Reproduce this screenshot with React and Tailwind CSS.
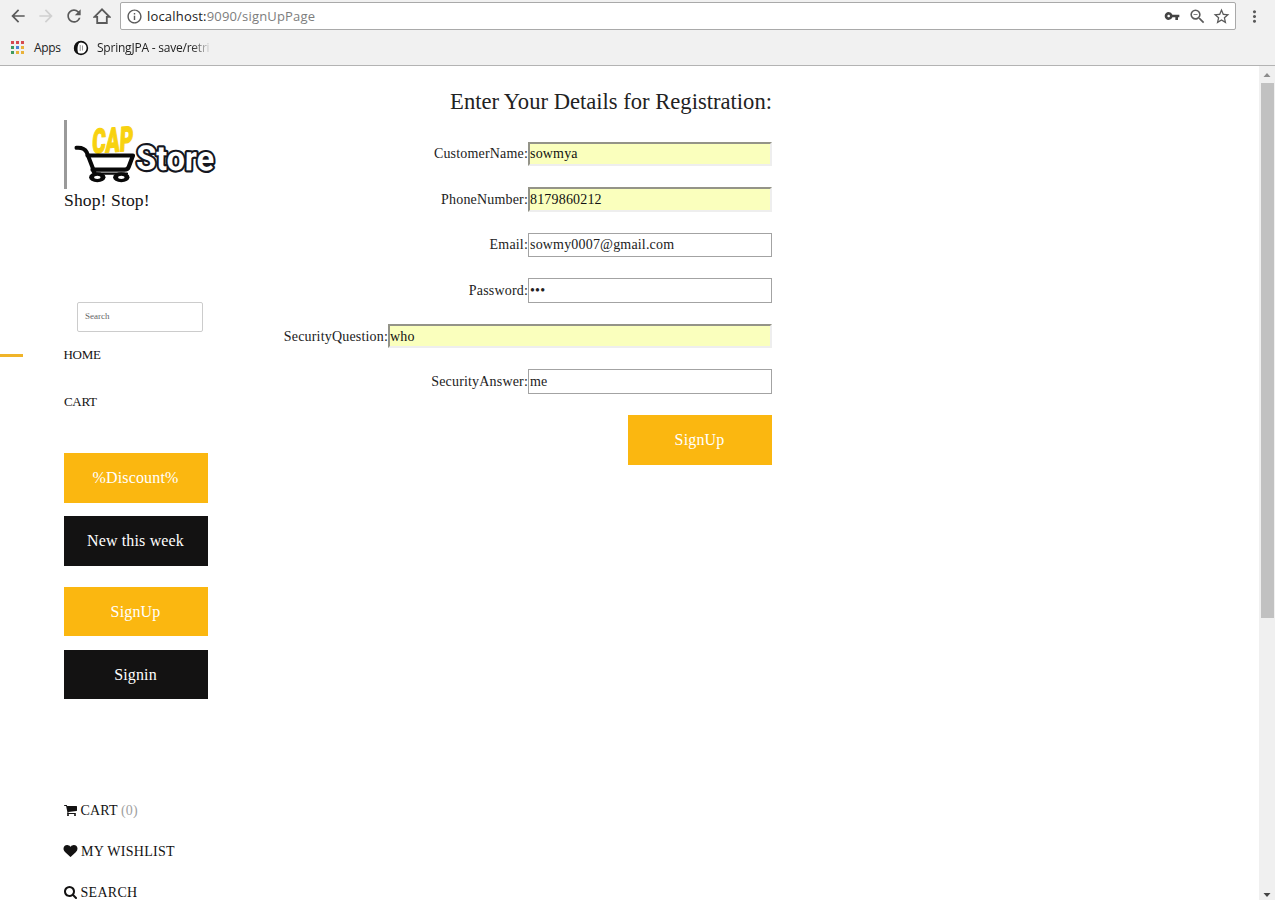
import React from "react";
import {
  MdArrowBack,
  MdArrowForward,
  MdRefresh,
  MdInfoOutline,
  MdVpnKey,
  MdZoomOut,
  MdStarBorder,
  MdMoreVert,
} from "react-icons/md";

const APP_DOTS = [
  "bg-[#d64a50]", "bg-[#d64a50]", "bg-[#d64a50]",
  "bg-[#3f9a5f]", "bg-[#4a84d8]", "bg-[#e9b23a]",
  "bg-[#3f9a5f]", "bg-[#e9b23a]", "bg-[#e9b23a]",
];

function BrowserBar() {
  return (
    <header className="h-[66px] shrink-0 border-b border-[#b3b3b3] bg-[#f1f1f1] font-['Open_Sans',sans-serif]">
      <div className="flex h-[32px] items-center text-[#5a5a5a]">
        <MdArrowBack className="ml-[8px] size-[20px] shrink-0" />
        <MdArrowForward className="ml-[8px] size-[20px] shrink-0 text-[#d0d0d0]" />
        <MdRefresh className="ml-[8px] size-[20px] shrink-0" />
        <svg viewBox="0 0 18 18" className="ml-[9px] size-[18px] shrink-0" fill="none" stroke="currentColor" strokeWidth="1.8">
          <path d="M1.500 9.800 9 2.300l7.500 7.500h-2.700v6.200H4.200V9.800z" />
        </svg>
        <div className="ml-[9px] flex h-[28px] w-[1116px] items-center rounded-[2px] border border-[#a9a9a9] bg-white">
          <MdInfoOutline className="ml-[5px] size-[17px] shrink-0" />
          <div className="ml-[4px] flex-1 whitespace-nowrap pt-[2px] text-[13px] tracking-[0.18px] text-[#7d7d7d]">
            <span className="text-[#222]">localhost:</span>9090/signUpPage
          </div>
          <MdVpnKey className="size-[16px] text-[#444]" />
          <MdZoomOut className="ml-[8px] size-[19px]" />
          <MdStarBorder className="ml-[5px] mr-[4px] size-[19px]" />
        </div>
        <MdMoreVert className="ml-[9px] size-[19px]" />
      </div>
      <div className="flex h-[32px] items-center text-[12px] text-[#222]">
        <div className="-mt-px ml-[11px] grid grid-cols-3 gap-[2px]">
          {APP_DOTS.map((c, i) => (
            <span key={i} className={"size-[3px] " + c} />
          ))}
        </div>
        <span className="ml-[10px] w-[39px] tracking-[-0.3px]">Apps</span>
        <svg viewBox="0 0 16 16" className="size-[16px]">
          <circle cx="8" cy="8" r="6.4" fill="#fff" stroke="#111" strokeWidth="1.6" />
          <path d="M7 1.4A6.6 6.6 0 0 0 6 14.3C3.800 11 4 5 7 1.4z" fill="#111" />
          <path d="M7.2 5v6M9.500 5.500v5" stroke="#999" strokeWidth="1" />
        </svg>
        <span className="ml-[8px] w-[115px] overflow-hidden whitespace-nowrap tracking-[-0.22px] [mask-image:linear-gradient(to_right,black_82%,transparent_100%)]">
          SpringJPA - save/retri
        </span>
      </div>
    </header>
  );
}

function Logo() {
  return (
    <div className="h-[69px] w-[156px] border-l-[3px] border-[#9a9a9a]">
      <svg viewBox="67 120 153 69" className="h-[69px] w-[153px] overflow-visible">
        <text
          x="0" y="0" transform="translate(91.700 153.500) rotate(-4) skewX(-7)"
          className="font-['Roboto',sans-serif] text-[34px] font-black"
          fill="#f8d210" stroke="#f8d210" strokeWidth="1.2" strokeLinejoin="round"
          textLength="41" lengthAdjust="spacingAndGlyphs"
        >
          CAP
        </text>
        <g fill="none" stroke="#080808" strokeLinecap="round" strokeLinejoin="round">
          <path d="M76.500 147.800c5-.4 8.200.6 10.200 4.400l7.800 20.300" strokeWidth="4" />
          <path d="M87.500 155.500h45.500l-4.200 11.200c-.8 2.200-2 3-4.200 3H92.500" strokeWidth="4.200" />
          <path d="M92.500 170c0 2.600.6 3.600 3 3.600H127" strokeWidth="2.200" />
        </g>
        <g fill="#080808">
          <ellipse cx="97.300" cy="177.300" rx="8.200" ry="5" />
          <ellipse cx="121.300" cy="177.300" rx="8.200" ry="5" />
        </g>
        <g fill="#fff">
          <ellipse cx="97.300" cy="177.300" rx="3.200" ry="1.600" />
          <ellipse cx="121.300" cy="177.300" rx="3.200" ry="1.600" />
        </g>
        <text
          x="136" y="169.500" transform="rotate(0.8 136 169)"
          className="font-['Roboto',sans-serif] text-[34px] font-bold"
          fill="#fff" stroke="#15171f" strokeWidth="4.400" strokeLinejoin="round" paintOrder="stroke"
          textLength="78" lengthAdjust="spacingAndGlyphs"
        >
          Store
        </text>
      </svg>
    </div>
  );
}

function Button({ className, children }) {
  return (
    <button className={"flex w-[144px] shrink-0 items-center justify-center pr-px text-[16px] tracking-[0.15px] text-white " + className}>
      {children}
    </button>
  );
}

const GLYPHS = {
  cart: "M704 1536q0 52-38 90t-90 38-90-38-38-90 38-90 90-38 90 38 38 90zm896 0q0 52-38 90t-90 38-90-38-38-90 38-90 90-38 90 38 38 90zm128-1088v512q0 24-16.500 42.500t-40.500 21.500l-1044 122q13 60 13 70 0 16-24 64h920q26 0 45 19t19 45-19 45-45 19h-1024q-26 0-45-19t-19-45q0-11 8-31.500t16-36 21.500-40 15.500-29.500l-177-823h-204q-26 0-45-19t-19-45 19-45 45-19h256q16 0 28.500 6.500t19.500 15.500 13 24.500 8 26 5.500 29.500 4.500 26h1201q26 0 45 19t19 45z",
  heart: "M896 1664q-26 0-44-18l-624-602q-10-8-27.500-26t-55.500-65.500-68-97.500-53.500-121-23.500-138q0-220 127-344t351-124q62 0 126.500 21.500t120 58 95.500 68.500 76 68q36-36 76-68t95.500-68.500 120-58 126.500-21.500q224 0 351 124t127 344q0 221-229 450l-623 600q-18 18-44 18z",
  search: "M1216 832q0-185-131.500-316.500t-316.500-131.500-316.500 131.500-131.500 316.500 131.500 316.500 316.500 131.500 316.500-131.500 131.500-316.500zm512 832q0 52-38 90t-90 38q-54 0-90-38l-343-342q-179 124-399 124-143 0-273.500-55.500t-225-150-150-225-55.500-273.500 55.500-273.500 150-225 225-150 273.500-55.500 273.500 55.500 225 150 150 225 55.500 273.500q0 220-124 399l343 343q37 37 37 90z",
};

function Glyph({ name }) {
  return (
    <svg viewBox="64 0 1792 1792" className="mb-[2px] mr-[2.5px] size-[14px] shrink-0 overflow-visible" fill="currentColor">
      <path d={GLYPHS[name]} />
    </svg>
  );
}

function Sidebar() {
  return (
    <aside className="flex w-[284px] shrink-0 flex-col items-start pl-[64px] pt-[54px] text-[#131212]">
      <Logo />
      <p className="h-[24px] shrink-0 text-[17.6px] leading-[23px] tracking-[0.1px]">Shop! Stop!</p>
      <div className="ml-[13px] mt-[89px] flex h-[30px] w-[126px] shrink-0 items-center rounded-[2px] border border-[#ccc] pl-[7px] text-[9px] text-[#666]">
        Search
      </div>
      <nav className="mt-[13px] shrink-0 text-[13px] tracking-[-0.3px]">
        <div className="-ml-[64px] flex h-[20px] items-center">
          <span className="mr-[40.5px] h-[3px] w-[23px] bg-[#f0b429]" />
          <span>HOME</span>
        </div>
        <div className="mt-[27px] flex h-[20px] items-center">CART</div>
      </nav>
      <Button className="mt-[41px] h-[50px] bg-[#fbb710]">%Discount%</Button>
      <Button className="mt-[13px] h-[50px] bg-[#131212]">New this week</Button>
      <Button className="mt-[21px] h-[49px] bg-[#fbb710]">SignUp</Button>
      <Button className="mt-[14px] h-[49px] bg-[#131212]">Signin</Button>
      <div className="mt-[102px] flex shrink-0 flex-col gap-[21px] text-[14px] leading-[20px] tracking-[0.15px]">
        <div className="flex items-center">
          <Glyph name="cart" />
          <span>CART <span className="text-[#9f9f9f]">(0)</span></span>
        </div>
        <div className="flex items-center">
          <Glyph name="heart" />
          <span className="ml-[0.5px] tracking-[0.3px]">MY WISHLIST</span>
        </div>
        <div className="flex items-center">
          <Glyph name="search" />
          <span className="tracking-[0.3px]">SEARCH</span>
        </div>
      </div>
    </aside>
  );
}

const AUTOFILLED = "border-2 border-t-[#949488] border-l-[#949488] border-r-[#eeeeee] border-b-[#eeeeee] bg-[#faffbd] pl-0 text-[#111]";
const PLAIN = "border border-[#a3a3a3] bg-white pl-px text-[#222]";

const FIELDS = [
  { label: "CustomerName:", value: "sowmya", row: "h-[24px]", text: "pb-[2px]", width: "w-[244px]", style: AUTOFILLED },
  { label: "PhoneNumber:", value: "8179860212", row: "h-[25px]", text: "", width: "w-[244px]", style: AUTOFILLED },
  { label: "Email:", value: "sowmy0007@gmail.com", row: "h-[24px]", text: "pb-[2px]", width: "w-[244px]", style: PLAIN },
  { label: "Password:", value: "•••", row: "h-[25px]", text: "", width: "w-[244px]", style: PLAIN },
  { label: "SecurityQuestion:", value: "who", row: "h-[24px]", text: "", width: "w-[384px]", style: AUTOFILLED },
  { label: "SecurityAnswer:", value: "me", row: "h-[25px]", text: "", width: "w-[244px]", style: PLAIN },
];

function RegistrationForm() {
  return (
    <main className="flex w-[488px] shrink-0 flex-col items-end pt-[20px]">
      <h1 className="whitespace-nowrap text-[22.600px] leading-[32px] text-[#222]">
        Enter Your Details for Registration:
      </h1>
      <div className="mt-[24px] flex flex-col items-end gap-[21px] text-[14px] tracking-[0.18px] text-[#222]">
        {FIELDS.map((f) => (
          <label key={f.label} className={"flex items-stretch " + f.row}>
            <span className={"flex items-center " + f.text}>{f.label}</span>
            <span className={"flex items-center " + f.width + " " + f.style + " " + f.text}>{f.value}</span>
          </label>
        ))}
        <Button className="h-[50px] bg-[#fbb710]">SignUp</Button>
      </div>
    </main>
  );
}

function Scrollbar() {
  return (
    <div className="ml-auto flex w-[16px] shrink-0 flex-col items-center bg-[#f0f0f0]">
      <svg viewBox="0 0 16 17" className="h-[17px] w-[16px] shrink-0">
        <path d="M4.500 11 8 7l3.500 4z" fill="#8c8c8c" />
      </svg>
      <div className="ml-px h-[535px] w-[13px] shrink-0 bg-[#c1c1c1]" />
      <svg viewBox="0 0 16 17" className="mt-auto h-[17px] w-[16px] shrink-0">
        <path d="M4.500 10h7L8 14z" fill="#444" />
      </svg>
    </div>
  );
}

export default function App() {
  return (
    <div className="flex h-[900px] w-[1275px] flex-col overflow-hidden bg-white">
      <BrowserBar />
      <div className="flex min-h-0 flex-1 font-['Liberation_Serif',serif]">
        <Sidebar />
        <RegistrationForm />
        <Scrollbar />
      </div>
    </div>
  );
}
